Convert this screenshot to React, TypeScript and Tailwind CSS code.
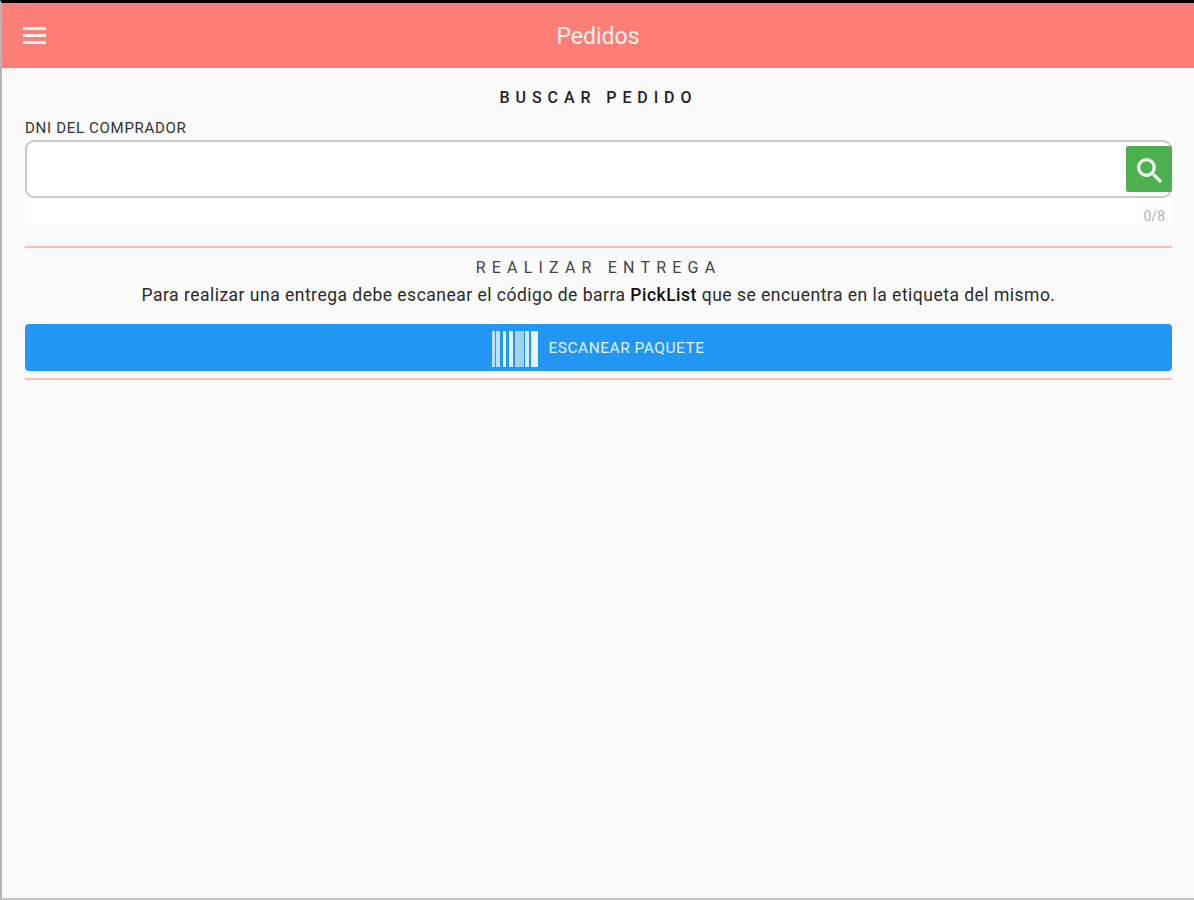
import React from 'react';

const bars = [
  [0, 3, 0.7],
  [4, 4, 0.7],
  [11, 3, 0.9],
  [17, 4, 0.85],
  [23, 4, 0.6],
  [27, 5, 0.55],
  [33, 4, 0.8],
  [39, 7, 0.9],
];

function Barcode() {
  return (
    <svg width="47" height="36" viewBox="0 0 47 36" className="shrink-0 mt-[1px]">
      {bars.map(([x, w, o]) => (
        <rect key={x} x={x} y="0" width={w} height="36" fill="#ffffff" opacity={o} />
      ))}
    </svg>
  );
}

export default function App() {
  return (
    <div className="h-[900px] flex flex-col bg-[#fafafa] border-t-[3px] border-t-black border-l-2 border-l-[#b5b5b5] border-b-2 border-b-[#c4c4c4] font-['Roboto',sans-serif] overflow-hidden">
      <header className="h-[65px] shrink-0 relative flex items-center justify-center bg-[#ff7f78] pt-[2px]">
        <button className="absolute left-[21px] top-[24px] w-[23px] flex flex-col gap-[4px]">
          <span className="h-[3px] bg-[#fff3f0]" />
          <span className="h-[3px] bg-[#fff3f0]" />
          <span className="h-[3px] bg-[#fff3f0]" />
        </button>
        <h1 className="text-[23px] leading-none text-[#fff0ec]">Pedidos</h1>
      </header>

      <main className="flex flex-col pl-[23px] pr-[22px]">
        <h2 className="mt-[21px] text-center text-[16px] leading-[18px] font-medium tracking-[5.9px] text-[#222222]">
          BUSCAR PEDIDO
        </h2>
        <label className="mt-[13px] text-[15px] leading-[16px] tracking-[0.7px] text-[#333333]">DNI DEL COMPRADOR</label>
        <div className="mt-[4px] h-[58px] flex justify-between bg-white border-2 border-[#c9c9c9] rounded-[9px]">
          <input className="flex-1 outline-none bg-transparent" />
          <button className="w-[46px] h-[46px] mt-[4px] -mr-[2px] pl-[2px] pt-[4px] flex items-center justify-center bg-[#4caf50] rounded-[2px]">
            <svg width="34" height="34" viewBox="0 0 24 24" fill="#f1f8f1" stroke="#f1f8f1" strokeWidth="0.4">
              <path d="M15.5 14h-.79l-.28-.27A6.47 6.47 0 0 0 16 9.5 6.5 6.5 0 1 0 9.5 16c1.61 0 3.09-.59 4.23-1.57l.27.28v.79l5 4.99L20.49 19l-4.99-5zm-6 0C7.01 14 5 11.99 5 9.5S7.01 5 9.5 5 14 7.01 14 9.5 11.99 14 9.5 14z" />
            </svg>
          </button>
        </div>
        <div className="h-[27px] flex items-center justify-end bg-white pr-[7px]">
          <span className="text-[14px] leading-none text-[#b0b0b0] mt-[8px]">0/8</span>
        </div>
        <div className="mt-[21px] h-[2px] bg-[#ffbdb7]" />

        <h2 className="mt-[11px] text-center text-[16px] leading-[18px] tracking-[6.2px] text-[#444444]">
          REALIZAR ENTREGA
        </h2>
        <p className="mt-[8px] text-center text-[17.5px] leading-[20px] tracking-[0.49px] text-[#2a2a2a]">
          Para realizar una entrega debe escanear el código de barra <b className="font-medium text-[#111111]">PickList</b> que se encuentra en la etiqueta del mismo.
        </p>
        <button className="mt-[19px] h-[47px] pt-[2px] flex items-center justify-center gap-[9px] bg-[#2196f3] rounded-[4px]">
          <Barcode />
          <span className="text-[15.5px] tracking-[0.5px] text-[#e3f2fd]">ESCANEAR PAQUETE</span>
        </button>
        <div className="mt-[7px] h-[2px] bg-[#ffbdb7]" />
      </main>
    </div>
  );
}
